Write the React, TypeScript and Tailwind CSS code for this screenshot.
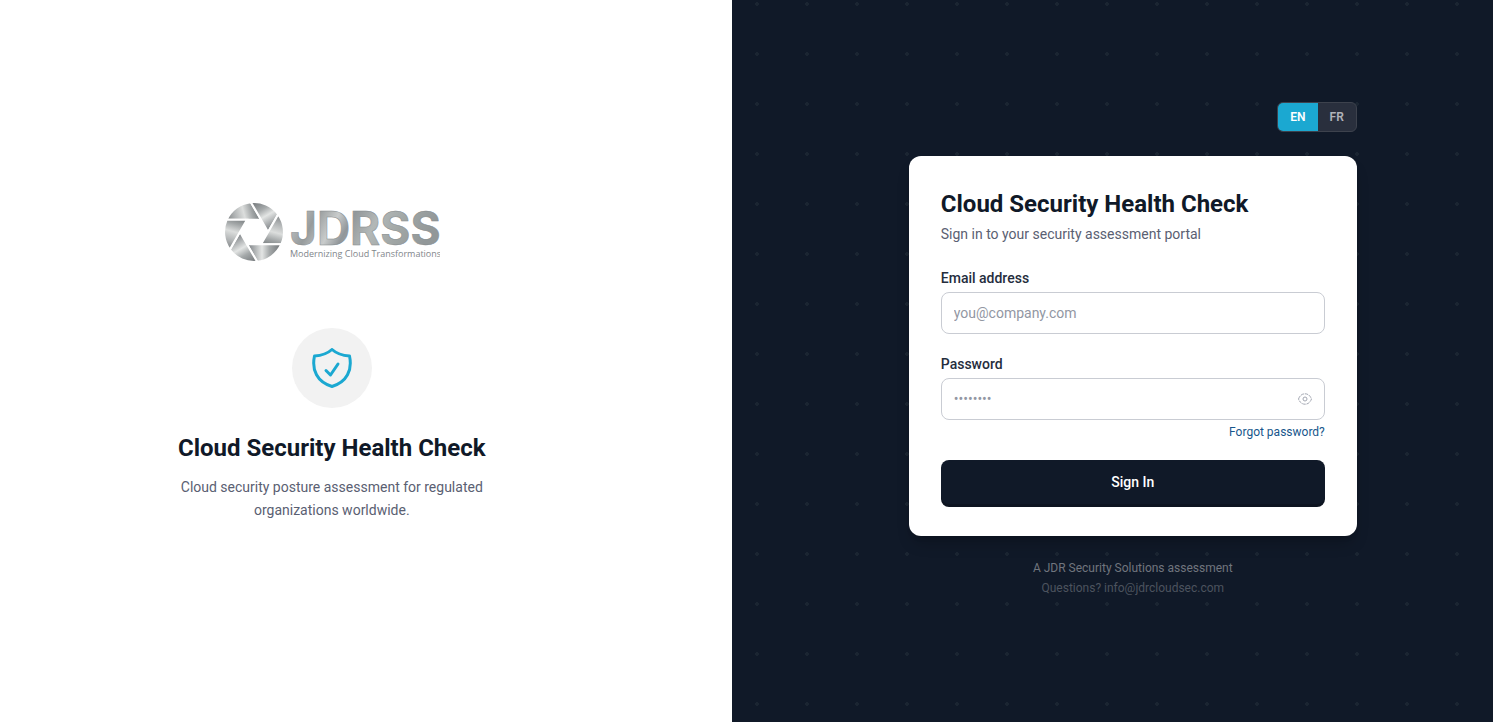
import { useState } from "react";

const blades = [
  { angle: 0, fill: "url(#steelA)" },
  { angle: 60, fill: "url(#steelB)" },
  { angle: 120, fill: "url(#steelA)" },
  { angle: 180, fill: "url(#steelB)" },
  { angle: 240, fill: "url(#steelB)" },
  { angle: 300, fill: "url(#steelA)" },
];

function Logo() {
  return (
    <svg viewBox="0 0 216 64" className="h-16 w-54" role="img" aria-label="JDRSS Modernizing Cloud Transformations">
      <defs>
        <linearGradient id="steelA" gradientUnits="userSpaceOnUse" x1="-26" y1="-12" x2="4" y2="-20">
          <stop offset="0" stopColor="#85898b" />
          <stop offset="0.25" stopColor="#b0b3b4" />
          <stop offset="0.55" stopColor="#dcdedd" />
          <stop offset="0.8" stopColor="#a3a7a8" />
          <stop offset="1" stopColor="#7d8284" />
        </linearGradient>
        <linearGradient id="steelB" gradientUnits="userSpaceOnUse" x1="-26" y1="-14" x2="4" y2="-14">
          <stop offset="0" stopColor="#75797c" />
          <stop offset="0.35" stopColor="#a5a9aa" />
          <stop offset="0.6" stopColor="#e3e5e4" />
          <stop offset="1" stopColor="#8b8f92" />
        </linearGradient>
        <linearGradient id="letters" x1="0" y1="0" x2="1" y2="0.2">
          <stop offset="0" stopColor="#a3a7a8" />
          <stop offset="0.1" stopColor="#b9bcbd" />
          <stop offset="0.22" stopColor="#969b9c" />
          <stop offset="0.36" stopColor="#c9cccc" />
          <stop offset="0.46" stopColor="#92979a" />
          <stop offset="0.62" stopColor="#b3b8b7" />
          <stop offset="0.8" stopColor="#a0a6a5" />
          <stop offset="1" stopColor="#929899" />
        </linearGradient>
      </defs>
      <g transform="translate(30 32)">
        {blades.map((b) => (
          <path
            key={b.angle}
            d="M-27.300 -12.200A30 30 0 0 1 -3.200 -29.800L7 -12.200Z"
            transform={`rotate(${b.angle})`}
            fill={b.fill}
            stroke="#fff"
            strokeWidth="2"
          />
        ))}
      </g>
      <text x="66" y="45" fontSize="46" className="font-[Inter,sans-serif] font-bold" fill="url(#letters)" stroke="#858a8c" strokeWidth="0.5">
        JDRSS
      </text>
      <text x="66" y="57" fontSize="9" className="font-['Open_Sans',sans-serif]" fill="#7f868b">
        Modernizing Cloud Transformations
      </text>
    </svg>
  );
}

function ShieldCheck() {
  return (
    <svg viewBox="0 0 40 40" className="size-10" fill="none" stroke="#1ba8d1" strokeWidth="3" strokeLinecap="round" strokeLinejoin="round" aria-hidden="true">
      <path d="M20 1.500C15 6 9.500 7.500 2.500 8C-0.500 22 5 34 20 38.500C35 34 40.500 22 37.500 8C30.500 7.500 25 6 20 1.500Z" />
      <path d="M14 22.500L18.500 27L26 16" />
    </svg>
  );
}

function EyeIcon() {
  return (
    <svg viewBox="0 0 16 16" className="size-4" fill="none" stroke="#a3a7b2" aria-hidden="true">
      <path d="M1.500 8C3 4.200 5.300 2.800 8 2.800S13 4.200 14.500 8C13 11.800 10.700 13.200 8 13.200S3 11.800 1.500 8Z" strokeDasharray="3.500 0.800" />
      <circle cx="8" cy="8" r="2" />
    </svg>
  );
}

const inputClass =
  "h-[42px] w-full rounded-lg border border-[#c9ccd3] bg-white px-3 text-sm text-[#101928] placeholder:text-[#9297a3] outline-none focus:border-[#1ba8d1]";

export default function App() {
  const [lang, setLang] = useState("EN");
  const [visible, setVisible] = useState(false);

  return (
    <div className="grid min-h-screen grid-cols-[49fr_51fr] bg-white font-[Roboto,sans-serif] text-[#101928] antialiased">
      <section className="flex flex-col items-center justify-center pr-[68px]">
        <Logo />
        <div className="mt-16 flex size-20 items-center justify-center rounded-full bg-[#f2f2f2]">
          <ShieldCheck />
        </div>
        <h2 className="mt-6 text-2xl font-bold">Cloud Security Health Check</h2>
        <p className="mt-3 max-w-80 text-center text-sm leading-[23px] text-[#5a6072]">
          Cloud security posture assessment for regulated organizations worldwide.
        </p>
      </section>

      <main className="flex flex-col items-center justify-center bg-[#101928] bg-[radial-gradient(circle,#1b2532_2px,transparent_2px)] bg-[length:50px_50px] bg-[position:0_-21px] pl-[41px]">
        <div className="flex w-full max-w-md flex-col pb-[22px]">
          <div className="flex h-[30px] self-end overflow-hidden rounded-md border border-[#3d424d] bg-[#292f3d] text-xs font-semibold">
            {["EN", "FR"].map((code) => (
              <button
                key={code}
                type="button"
                aria-pressed={lang === code}
                onClick={() => setLang(code)}
                className={lang === code ? "bg-[#1ba8d1] px-3 text-white" : "px-3 text-[#b0b3b9]"}
              >
                {code}
              </button>
            ))}
          </div>

          <form className="mt-6 flex flex-col rounded-xl bg-white p-8 shadow-lg shadow-black/20" onSubmit={(e) => e.preventDefault()}>
            <h1 className="text-2xl font-bold">Cloud Security Health Check</h1>
            <p className="mt-1 text-sm text-[#5a6072]">Sign in to your security assessment portal</p>

            <label htmlFor="email" className="mt-6 mb-1 text-sm font-medium text-[#252d3d]">
              Email address
            </label>
            <input id="email" type="email" placeholder="you@company.com" className={inputClass} />

            <label htmlFor="password" className="mt-5 mb-1 text-sm font-medium text-[#252d3d]">
              Password
            </label>
            <div className="relative">
              <input id="password" type={visible ? "text" : "password"} placeholder="••••••••" className={inputClass} />
              <button
                type="button"
                aria-label="Show password"
                onClick={() => setVisible(!visible)}
                className="absolute inset-y-0 right-3 flex items-center"
              >
                <EyeIcon />
              </button>
            </div>
            <a href="#forgot" className="mt-1 self-end text-xs text-[#17568c]">
              Forgot password?
            </a>

            <button type="submit" className="mt-5 h-11 rounded-lg bg-[#101928] text-sm font-medium text-white shadow-[0_3px_0_#0d1420]">
              Sign In
            </button>
          </form>

          <footer className="mt-[22px] text-center text-xs leading-5">
            <p className="text-[#70757e]">A JDR Security Solutions assessment</p>
            <p className="text-[#4c535e]">
              Questions? <a href="mailto:info@jdrcloudsec.com">info@jdrcloudsec.com</a>
            </p>
          </footer>
        </div>
      </main>
    </div>
  );
}
